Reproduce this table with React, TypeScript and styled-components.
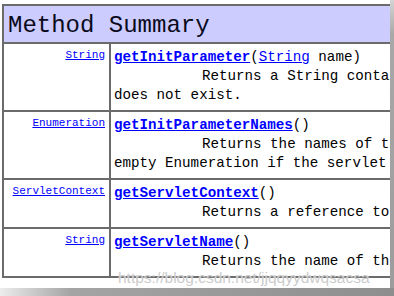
import styled, { createGlobalStyle } from "styled-components";

const GlobalStyle = createGlobalStyle`
  html, body {
    margin: 0;
    padding: 0;
    background: #ffffff;
  }
`;

const Frame = styled.div`
  position: relative;
  width: 394px;
  height: 296px;
  display: grid;
  grid-template-columns: 390px 4px;
  grid-template-rows: 288px 8px;
  overflow: hidden;
  background: #ffffff;
`;

const Shot = styled.div`
  overflow: hidden;
  padding: 4px 0 0 2px;
`;

const RightShadow = styled.div`
  background: linear-gradient(to bottom, #d4d4d4 0%, #a8a8a8 12%, #9c9c9c 100%);
`;

const BottomShadow = styled.div`
  grid-column: 1 / span 2;
  background: linear-gradient(to right, #ececec 0%, #a4a4a4 18%, #8e8e8e 100%);
`;

const Table = styled.div`
  width: 720px;
  border: 2px solid #6b6b6b;
  font-family: "Liberation Mono", "DejaVu Sans Mono", monospace;
  color: #000000;
`;

const Header = styled.div`
  height: 36px;
  background: #ccccff;
  border-bottom: 2px solid #6b6b6b;
  padding-left: 4px;
  font-size: 24px;
  line-height: 39px;
  color: #0a0a1a;
  white-space: nowrap;
`;

const Row = styled.div`
  display: grid;
  grid-template-columns: 107px 1fr;
  & + & {
    border-top: 2px solid #6b6b6b;
  }
`;

const TypeCell = styled.div`
  border-right: 2px solid #6b6b6b;
  padding: 4px 4px 5px 0;
  text-align: right;
  font-size: 11px;
  line-height: 15px;
  white-space: nowrap;
`;

const DescCell = styled.div`
  padding: 4px 3px 5px 3px;
  font-size: 14.2px;
  line-height: 19px;
  white-space: nowrap;
`;

const Link = styled.a<{ $bold?: boolean }>`
  color: #0000ff;
  text-decoration: underline;
  font-weight: ${(p) => (p.$bold ? 700 : 400)};
  cursor: pointer;
`;

const Line = styled.div<{ $indent?: boolean }>`
  padding-left: ${(p) => (p.$indent ? "88px" : "0")};
`;

const Watermark = styled.div`
  position: absolute;
  left: 118px;
  top: 269px;
  font-family: "Liberation Sans", Arial, sans-serif;
  font-size: 15.5px;
  color: rgba(185, 185, 185, 0.75);
  text-shadow: 0 0 1px #ffffff;
  white-space: nowrap;
  pointer-events: none;
`;

type Method = {
  type: string;
  name: string;
  param?: string;
  lines: string[];
};

const methods: Method[] = [
  {
    type: "String",
    name: "getInitParameter",
    param: "String",
    lines: [
      "Returns a String containing the value of the named context-wide initialization parameter, or null if the parameter",
      "does not exist.",
    ],
  },
  {
    type: "Enumeration",
    name: "getInitParameterNames",
    lines: [
      "Returns the names of the context's initialization parameters as an Enumeration of String objects, or an",
      "empty Enumeration if the servlet has no initialization parameters.",
    ],
  },
  {
    type: "ServletContext",
    name: "getServletContext",
    lines: ["Returns a reference to the ServletContext in which the caller is executing."],
  },
  {
    type: "String",
    name: "getServletName",
    lines: ["Returns the name of this servlet instance."],
  },
];

const App = () => {
  return (
    <>
      <GlobalStyle />
      <Frame>
        <Shot>
          <Table>
            <Header>Method Summary</Header>
            {methods.map((m) => (
              <Row key={m.name}>
                <TypeCell>
                  <Link>{m.type}</Link>
                </TypeCell>
                <DescCell>
                  <Line>
                    <Link $bold>{m.name}</Link>(
                    {m.param ? (
                      <>
                        <Link>{m.param}</Link> name
                      </>
                    ) : null}
                    )
                  </Line>
                  {m.lines.map((l, i) => (
                    <Line key={i} $indent={i === 0}>
                      {l}
                    </Line>
                  ))}
                </DescCell>
              </Row>
            ))}
          </Table>
        </Shot>
        <RightShadow />
        <BottomShadow />
        <Watermark>https://blog.csdn.net/jjqqyydwqsacsa</Watermark>
      </Frame>
    </>
  );
};

export default App;
